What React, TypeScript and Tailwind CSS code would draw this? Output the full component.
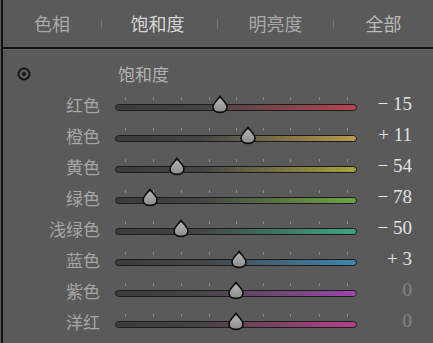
import React from 'react';

type Row = { label: string; value: number; color: string };

const rows: Row[] = [
  { label: '红色', value: -15, color: '#b8434f' },
  { label: '橙色', value: 11, color: '#b89a4c' },
  { label: '黄色', value: -54, color: '#a8a23c' },
  { label: '绿色', value: -78, color: '#6ea544' },
  { label: '浅绿色', value: -50, color: '#3da585' },
  { label: '蓝色', value: 3, color: '#3d86b3' },
  { label: '紫色', value: 0, color: '#9d47ab' },
  { label: '洋红', value: 0, color: '#b8408a' },
];

const ticks = [10, 38, 66, 94, 121, 148, 175, 204, 232];

const cjk = { fontFamily: '"Noto Sans CJK SC", "Noto Sans", sans-serif' };
const serif = { fontFamily: '"Liberation Serif", "DejaVu Serif", serif' };

const Thumb = ({ left }: { left: number }) => (
  <svg
    width="18"
    height="19"
    viewBox="0 0 18 19"
    className="absolute top-[6px]"
    style={{ left: left - 9 }}
  >
    <defs>
      <linearGradient id="thumbFill" x1="0" y1="0" x2="0" y2="1">
        <stop offset="0" stopColor="#b8b8b8" />
        <stop offset="1" stopColor="#8c8c8c" />
      </linearGradient>
    </defs>
    <path
      d="M9 1.5 C10.8 4.2 16 8.2 16 12 C16 15.5 12.9 17.4 9 17.4 C5.1 17.4 2 15.5 2 12 C2 8.2 7.2 4.2 9 1.5 Z"
      fill="url(#thumbFill)"
      stroke="#111"
      strokeWidth="1.7"
    />
  </svg>
);

const Slider = ({ value, color }: { value: number; color: string }) => {
  const pos = 121 + value * 1.1;
  return (
    <div className="relative h-full w-[242px]">
      {ticks.map((t) => (
        <div key={t} className="absolute top-[8px] h-[3px] w-px bg-[#8a8a8a]" style={{ left: t }} />
      ))}
      <div
        className="absolute left-0 right-0 top-[15px] h-[7px] rounded-full border border-[#1c1c1c]"
        style={{ background: `linear-gradient(to right, #3c3c3c 0%, #444 35%, ${color} 100%)` }}
      />
      <Thumb left={pos} />
    </div>
  );
};

const fmt = (v: number) => (v === 0 ? '0' : v > 0 ? `+ ${v}` : `− ${Math.abs(v)}`);

export default function App() {
  return (
    <div className="w-[433px] h-[343px] overflow-hidden bg-[#5a5a5a] flex">
      <div className="w-[3px] bg-[#5a5a5a] flex">
        <div className="ml-[1px] w-[2px] bg-[#111]" />
      </div>
      <div className="flex-1 flex flex-col">
        <div className="h-[47px] flex items-center" style={cjk}>
          <div className="w-[98px] text-center text-[18px] text-[#a9a9a9]">色相</div>
          <div className="w-px h-[10px] bg-[#777]" />
          <div className="w-[115px] text-center text-[18px] text-[#d6d6d6] pr-[4px]">饱和度</div>
          <div className="w-px h-[10px] bg-[#777]" />
          <div className="w-[115px] text-center text-[18px] text-[#a9a9a9]">明亮度</div>
          <div className="w-px h-[10px] bg-[#777]" />
          <div className="flex-1 text-center text-[18px] text-[#b9b9b9]">全部</div>
        </div>
        <div className="h-[2px] bg-[#111]" />
        <div className="h-px bg-[#666]" />
        <div className="h-[36px] flex items-center mt-[6px]">
          <svg width="16" height="16" viewBox="0 0 16 16" className="ml-[13px]">
            <circle cx="8" cy="8" r="5.6" fill="none" stroke="#111" strokeWidth="1.8" />
            <circle cx="8" cy="8" r="1.9" fill="#111" />
          </svg>
          <div className="ml-[86px] text-[17px] text-[#b3b3b3]" style={cjk}>饱和度</div>
        </div>
        <div className="flex flex-col -mt-[3px]">
          {rows.map((r) => (
            <div key={r.label} className="h-[31px] flex items-center">
              <div className="w-[97px] text-right text-[17px] text-[#a6a6a6]" style={cjk}>
                {r.label}
              </div>
              <div className="ml-[15px] h-full">
                <Slider value={r.value} color={r.color} />
              </div>
              <div
                className={`w-[55px] text-right text-[19px] ${r.value === 0 ? 'text-[#858585]' : 'text-[#e2e2e2]'}`}
                style={serif}
              >
                {fmt(r.value)}
              </div>
            </div>
          ))}
        </div>
      </div>
    </div>
  );
}
